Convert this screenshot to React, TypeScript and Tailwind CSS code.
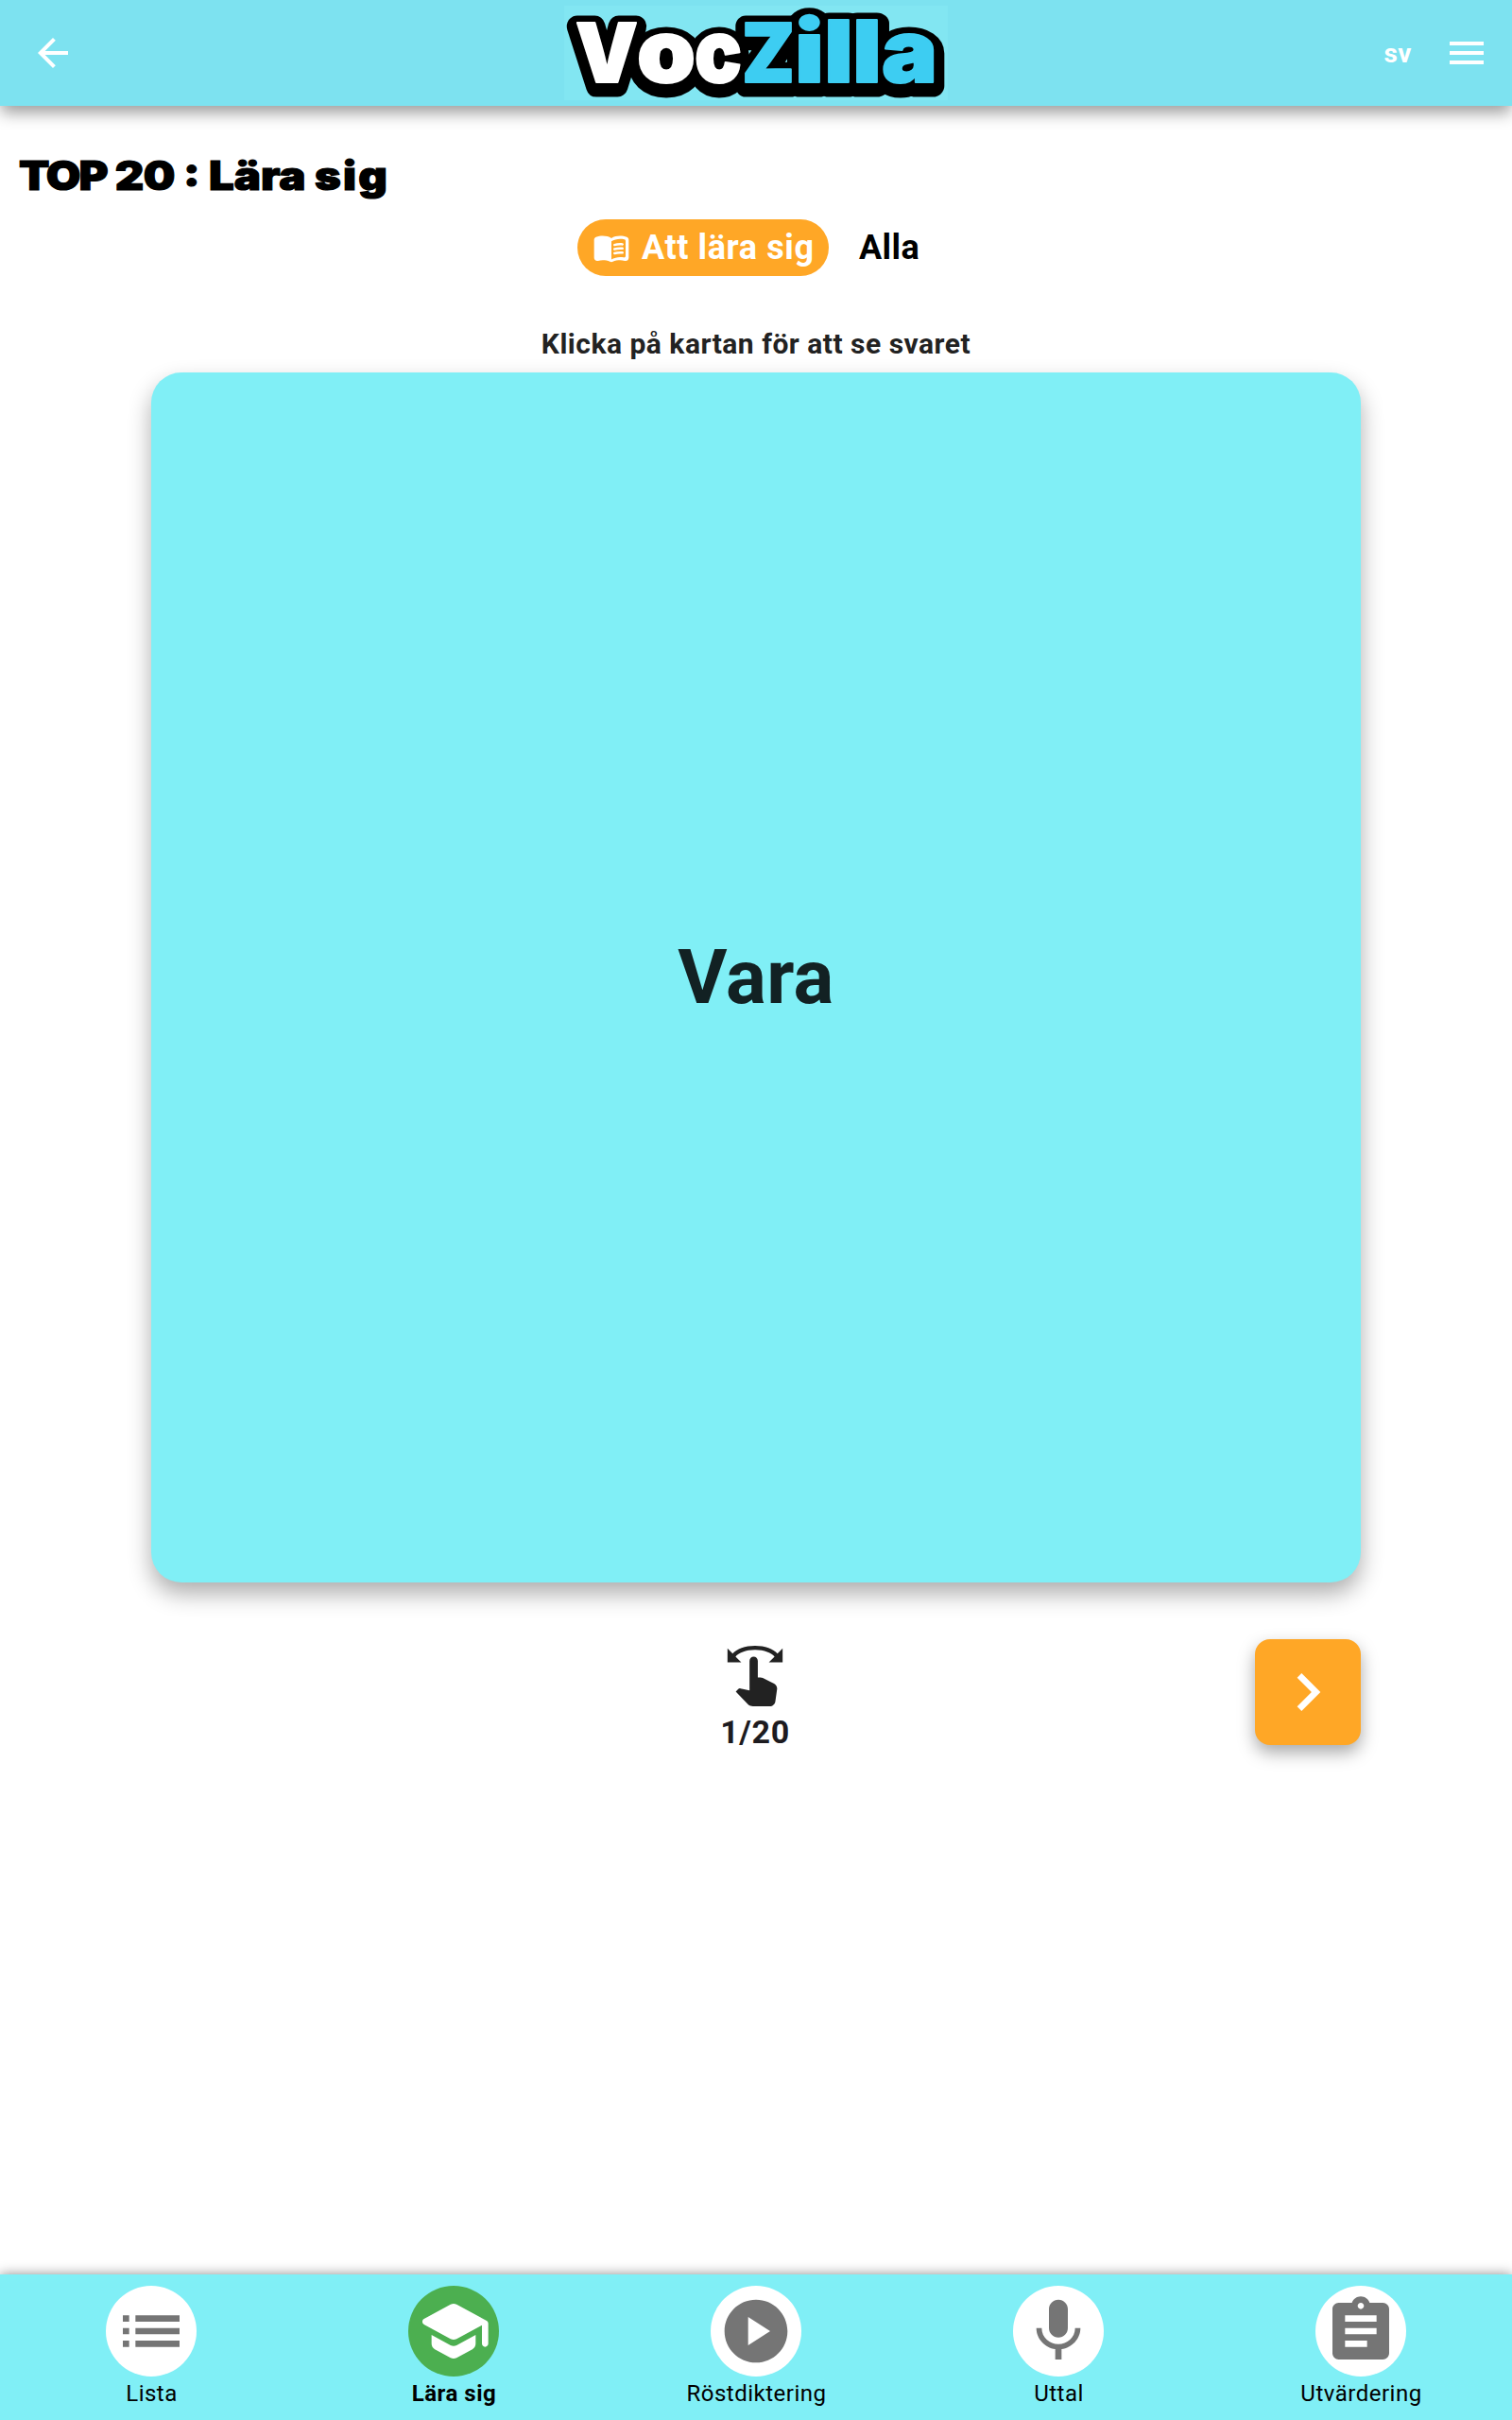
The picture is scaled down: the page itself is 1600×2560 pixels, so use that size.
import type { ReactNode } from "react";
import {
  MdArrowBack,
  MdAssignment,
  MdChevronRight,
  MdList,
  MdMenu,
  MdMic,
  MdPlayCircle,
  MdSwipe,
} from "react-icons/md";

type Letter = { ch: string; x: number; w: number; size: number; fill: string };

const WHITE = "#ffffff";
const BLUE = "#3dcdf2";

const letters: Letter[] = [
  { ch: "V", x: 12, w: 66, size: 86, fill: WHITE },
  { ch: "o", x: 77, w: 62, size: 93, fill: WHITE },
  { ch: "c", x: 138, w: 50, size: 93, fill: WHITE },
  { ch: "Z", x: 188, w: 56, size: 86, fill: BLUE },
  { ch: "i", x: 244, w: 31, size: 91, fill: BLUE },
  { ch: "l", x: 275, w: 31, size: 91, fill: BLUE },
  { ch: "l", x: 305, w: 31, size: 91, fill: BLUE },
  { ch: "a", x: 336, w: 59, size: 93, fill: BLUE },
];

function Wordmark({ outline }: { outline: boolean }) {
  return (
    <g
      fontFamily="Inter, sans-serif"
      fontWeight={900}
      strokeLinejoin="round"
      transform={outline ? "translate(0 4.5)" : undefined}
    >
      {letters.map((l, i) => (
        <text
          key={i}
          x={l.x}
          y={80.5}
          fontSize={l.size}
          textLength={l.w}
          lengthAdjust="spacingAndGlyphs"
          fill={outline ? "#000" : l.fill}
          stroke={outline ? "#000" : l.fill}
          strokeWidth={outline ? 23 : 2}
        >
          {l.ch}
        </text>
      ))}
    </g>
  );
}

function Logo() {
  return (
    <svg width="406" height="100" viewBox="0 0 406 100" className="overflow-visible bg-[#82e6f2]">
      <Wordmark outline />
      <Wordmark outline={false} />
    </svg>
  );
}

function BookIcon() {
  return (
    <svg width="40" height="40" viewBox="0 0 24 24" fill="currentColor">
      <path d="M17.5 4.5c-1.95 0-4.05.4-5.5 1.5-1.45-1.1-3.55-1.5-5.5-1.5-1.45 0-2.99.22-4.28.79C1.49 5.62 1 6.33 1 7.14v11.28c0 1.3 1.22 2.26 2.48 1.94.98-.25 2.02-.36 3.02-.36 1.56 0 3.22.26 4.56.92.6.3 1.28.3 1.87 0 1.34-.67 3-.92 4.56-.92 1 0 2.04.11 3.02.36 1.26.33 2.48-.63 2.48-1.94V7.14c0-.81-.49-1.52-1.22-1.85-1.28-.57-2.82-.79-4.27-.79zM21 17.23c0 .63-.58 1.09-1.2.98-.75-.14-1.53-.2-2.3-.2-1.7 0-4.15.65-5.5 1.5V8c1.35-.85 3.8-1.5 5.5-1.5.92 0 1.83.09 2.7.28.46.1.8.51.8.98v9.47z" />
      <path d="M13.98 11.01c-.32 0-.61-.2-.71-.52-.13-.39.09-.82.48-.94 1.54-.5 3.53-.66 5.36-.45.41.05.71.42.66.83-.05.41-.42.71-.83.66-1.62-.19-3.39-.04-4.73.39-.08.01-.16.03-.23.03zM13.98 13.67c-.32 0-.61-.2-.71-.52-.13-.39.09-.82.48-.94 1.53-.5 3.53-.66 5.36-.45.41.05.71.42.66.83-.05.41-.42.71-.83.66-1.62-.19-3.39-.04-4.73.39-.08.02-.16.03-.23.03zM13.98 16.33c-.32 0-.61-.2-.71-.52-.13-.39.09-.82.48-.94 1.53-.5 3.53-.66 5.36-.45.41.05.71.42.66.83-.05.41-.42.7-.83.66-1.62-.19-3.39-.04-4.73.39-.08.02-.16.03-.23.03z" />
    </svg>
  );
}

function SchoolIcon() {
  return (
    <svg width="80" height="80" viewBox="0 0 24 24" fill="currentColor">
      <path d="M5 13.18v2.81c0 .73.4 1.41 1.04 1.76l5 2.73c.6.33 1.32.33 1.92 0l5-2.73c.64-.35 1.04-1.03 1.04-1.76v-2.81l-6.04 3.3c-.6.33-1.32.33-1.92 0L5 13.18zm6.04-9.66l-8.43 4.6c-.69.38-.69 1.38 0 1.76l8.43 4.6c.6.33 1.32.33 1.92 0L21 10.09V16c0 .55.45 1 1 1s1-.45 1-1V9.59c0-.37-.2-.7-.52-.88l-9.52-5.19c-.6-.32-1.32-.32-1.92 0z" />
    </svg>
  );
}

function Tab({ label, active = false, children }: { label: string; active?: boolean; children: ReactNode }) {
  return (
    <button className="flex flex-1 flex-col items-center pt-3">
      <span
        className={
          active
            ? "flex size-24 items-center justify-center rounded-full bg-[#4caf50] text-white"
            : "flex size-24 items-center justify-center rounded-full bg-white text-[#757575]"
        }
      >
        {children}
      </span>
      <span
        className={
          active
            ? "mt-1 pl-px text-[24px] leading-[28px] font-bold tracking-[0.5px] text-black"
            : "mt-1 pl-px text-[24px] leading-[28px] font-normal tracking-[0.5px] text-black"
        }
      >
        {label}
      </span>
    </button>
  );
}

export default function App() {
  return (
    <div className="flex h-[2560px] w-[1600px] flex-col overflow-hidden bg-white font-[Roboto,sans-serif]">
      <header className="grid h-28 shrink-0 grid-cols-3 items-center bg-[#7de2f0] px-6 text-white shadow-[0_8px_16px_-1px_rgba(0,0,0,0.4)]">
        <MdArrowBack size={48} className="ml-2" />
        <div className="flex justify-center">
          <Logo />
        </div>
        <div className="flex items-center justify-end gap-[34px]">
          <span className="pt-0.5 text-[28px] leading-none font-bold tracking-[0.5px]">sv</span>
          <MdMenu size={48} />
        </div>
      </header>

      <main className="flex flex-1 flex-col">
        <h1 className="mt-[48px] ml-[20px] h-[52px] w-[360px] origin-left scale-x-[1.125] font-[Inter,sans-serif] text-[42px] leading-[52px] font-black whitespace-nowrap text-black [-webkit-text-stroke:1.2px_black]">
          <span className="tracking-[-1.8px]">TOP</span> <span className="tracking-[-0.6px]">20</span> :{" "}
          <span>Lära</span> <span className="tracking-[2px]">sig</span>
        </h1>

        <div className="mt-[20px] flex h-[60px] pl-[611px]">
          <button className="flex w-[266px] items-center gap-[12px] rounded-full bg-[#ffa726] pl-4 text-[36px] font-bold tracking-[0.6px] whitespace-nowrap text-white">
            <BookIcon />
            Att lära sig
          </button>
          <button className="pl-[32px] text-[36px] font-bold tracking-[0.4px] text-black">Alla</button>
        </div>

        <p className="mt-[52px] h-[40px] text-center text-[30px] leading-[40px] font-bold tracking-[0.5px] text-[#222222]">
          Klicka på kartan för att se svaret
        </p>

        <section className="mx-auto mt-[10px] flex size-[1280px] items-center justify-center rounded-[32px] bg-[#80eff6] shadow-[0_12px_24px_rgba(0,0,0,0.32)]">
          <span className="text-[80px] leading-none font-bold tracking-[0.4px] text-[#122123]">Vara</span>
        </section>

        <div className="mx-auto mt-[60px] grid w-[1280px] grid-cols-3">
          <div className="col-start-2 flex flex-col items-center pt-1 pr-0.5 text-[#222222]">
            <MdSwipe size={70} />
            <span className="mt-[4px] text-[34px] leading-[40px] font-bold tracking-[0.6px] text-[#1d1b20]">1/20</span>
          </div>
          <button className="flex size-28 items-center justify-center justify-self-end rounded-2xl bg-[#ffa726] text-white shadow-[0_8px_18px_rgba(0,0,0,0.34)]">
            <MdChevronRight size={80} />
          </button>
        </div>
      </main>

      <nav className="flex h-[154px] shrink-0 bg-[#80eff6] shadow-[0_0_12px_rgba(0,0,0,0.45)]">
        <Tab label="Lista">
          <MdList size={80} />
        </Tab>
        <Tab label="Lära sig" active>
          <SchoolIcon />
        </Tab>
        <Tab label="Röstdiktering">
          <MdPlayCircle size={80} />
        </Tab>
        <Tab label="Uttal">
          <MdMic size={80} />
        </Tab>
        <Tab label="Utvärdering">
          <MdAssignment size={80} />
        </Tab>
      </nav>
    </div>
  );
}
